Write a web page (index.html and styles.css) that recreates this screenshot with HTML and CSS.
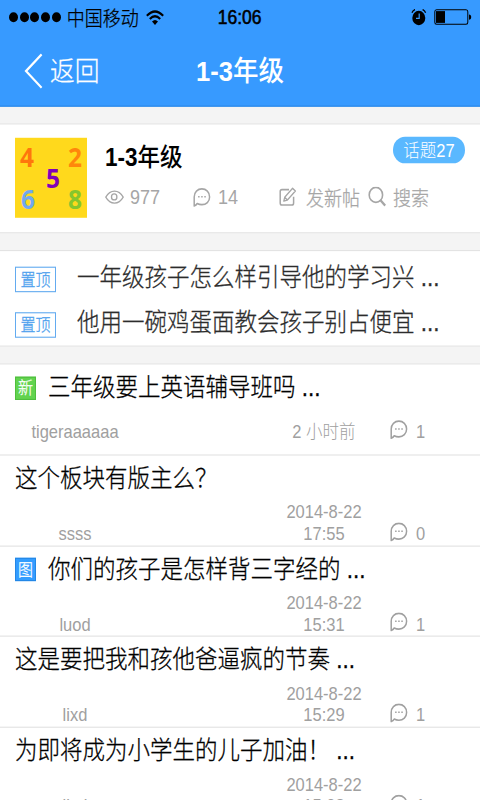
FILE: index.html
```html
<!DOCTYPE html>
<html lang="zh-CN">
<head>
<meta charset="utf-8">
<title>1-3年级</title>
<link rel="stylesheet" href="styles.css">
</head>
<body>
<svg class="defs" width="0" height="0">
  <symbol id="bubble" viewBox="0 0 18 18">
    <path d="M1.2 16.4V8.2C1.2 4 4.6 1 8.9 1S16.6 4 16.6 8.2S13.2 15.2 8.9 15.2Q6.2 15.2 4.2 14.2Q3.2 15.8 1.2 16.4Z" fill="none" stroke="currentColor" stroke-width="1.5" stroke-linejoin="round"/>
    <path d="M5.1 7.4h1.5v1.3H5.1zM8.2 7.4h1.5v1.3H8.2zM11.3 7.4h1.5v1.3h-1.5z" fill="currentColor"/>
  </symbol>
</svg>
<div class="screen">
  <header class="top">
    <div class="status">
      <div class="signal"><i></i><i></i><i></i><i></i><i></i></div>
      <span class="carrier">中国移动</span>
      <svg class="wifi" viewBox="0 0 18 14" width="18" height="14"><g fill="none" stroke="#000" stroke-width="2.1"><path d="M.8 5.2Q9-2.6 17.2 5.2"/><path d="M3.8 8.1Q9 3.2 14.2 8.1"/></g><path d="M6 10.3Q9 7.6 12 10.3L9 13.4Z"/></svg>
      <span class="clock">16:06</span>
      <svg class="alarm" viewBox="0 0 16 16" width="16" height="16"><circle cx="7.8" cy="8.2" r="6.5"/><path d="M1 3.5Q1.8 1.4 4 .6M14.6 3.5Q13.8 1.4 11.6 .6" fill="none" stroke="#000" stroke-width="1.3"/><path d="M8.2 4.2V8.6H5" fill="none" stroke="#379aff" stroke-width="1.2"/></svg>
      <svg class="battery" viewBox="0 0 38 15" width="38" height="15"><rect x=".8" y=".8" width="33" height="13" rx="1.8" fill="none" stroke="#000" stroke-width="1"/><rect x="2" y="2" width="9" height="10.6"/><path d="M35 5Q37.2 5 37.2 7.4T35 9.8Z"/></svg>
    </div>
    <div class="nav">
      <a class="back"><svg viewBox="0 0 19 32" width="19" height="32"><path d="M17.6 1L2 16L17.6 31" fill="none" stroke="#fff" stroke-width="2.1"/></svg><span>返回</span></a>
      <h1>1-3<span>年级</span></h1>
    </div>
  </header>

  <section class="card forum">
    <div class="cover">
      <span class="n4">4</span><span class="n2">2</span>
      <span class="n5">5</span>
      <span class="n6">6</span><span class="n8">8</span>
    </div>
    <div class="info">
      <div class="head"><h2>1-3<span>年级</span></h2><span class="pill">话题27</span></div>
      <div class="stats">
        <span class="views"><svg viewBox="0 0 19 13" width="19" height="13"><g fill="none" stroke="currentColor" stroke-width="1.3"><path d="M.8 6.4Q4.2 1 9.5 1T18.2 6.4Q14.8 11.8 9.5 11.8T.8 6.4Z"/><circle cx="9.2" cy="6.2" r="2.7"/></g></svg>977</span>
        <span class="replies"><svg width="18" height="18"><use href="#bubble"/></svg>14</span>
        <span class="post"><svg viewBox="0 0 18 18" width="18" height="18"><g fill="none" stroke="currentColor" stroke-width="1.5" stroke-linejoin="round"><path d="M10 2.6H3Q1.2 2.6 1.2 4.4V14.7Q1.2 16.5 3 16.5H12.8Q14.6 16.5 14.6 14.7V9"/><path d="M4.8 13L5.7 9.6L13.6 1.5L16.4 3.9L8.4 12.1ZM5.7 9.6L8.4 12.1" stroke-width="1.3"/></g></svg><em>发新帖</em></span>
        <span class="search"><svg viewBox="0 0 18 18" width="18" height="18"><g fill="none" stroke="currentColor"><circle cx="7.9" cy="7.4" r="6.7" stroke-width="1.6"/><path d="M12.4 12.2L17.2 17" stroke-width="2.2"/></g></svg><em>搜索</em></span>
      </div>
    </div>
  </section>

  <section class="card pinned">
    <div class="pin"><span class="tag">置顶</span><span>一年级孩子怎么样引导他的学习兴 ...</span></div>
    <div class="pin"><span class="tag">置顶</span><span>他用一碗鸡蛋面教会孩子别占便宜 ...</span></div>
  </section>

  <section class="card list">
    <article class="row short">
      <h3><span class="badge new">新</span>三年级要上英语辅导班吗 ...</h3>
      <div class="meta"><span class="name">tigeraaaaaa</span><span class="date">2 小时前</span><span class="count"><svg width="18" height="18"><use href="#bubble"/></svg>1</span></div>
    </article>
    <article class="row">
      <h3>这个板块有版主么？</h3>
      <div class="meta"><span class="name">ssss</span><span class="date">2014-8-22 17:55</span><span class="count"><svg width="18" height="18"><use href="#bubble"/></svg>0</span></div>
    </article>
    <article class="row">
      <h3><span class="badge pic">图</span>你们的孩子是怎样背三字经的 ...</h3>
      <div class="meta"><span class="name">luod</span><span class="date">2014-8-22 15:31</span><span class="count"><svg width="18" height="18"><use href="#bubble"/></svg>1</span></div>
    </article>
    <article class="row">
      <h3>这是要把我和孩他爸逼疯的节奏 ...</h3>
      <div class="meta"><span class="name">lixd</span><span class="date">2014-8-22 15:29</span><span class="count"><svg width="18" height="18"><use href="#bubble"/></svg>1</span></div>
    </article>
    <article class="row">
      <h3>为即将成为小学生的儿子加油！ ...</h3>
      <div class="meta"><span class="name">lixd</span><span class="date">2014-8-22 15:28</span><span class="count"><svg width="18" height="18"><use href="#bubble"/></svg>1</span></div>
    </article>
  </section>
</div>
</body>
</html>
```

FILE: styles.css
```css
* { box-sizing: border-box; margin: 0; padding: 0; }
html, body { width: 480px; height: 800px; overflow: hidden; }
body { background: #f4f4f4; font-family: "Liberation Sans", "Noto Sans CJK SC", sans-serif; font-weight: 300; }
.defs { display: block; }
svg { display: block; flex: none; }
em { font-style: normal; padding-top: 3px; }

/* 2:3 layout stretched vertically to the 3:5 viewport */
.screen {
  width: 480px; height: 720px; overflow: hidden;
  transform: scaleY(1.11111); transform-origin: 0 0;
  background: #f4f4f4;
}

.carrier, .back span, em, .pin, h3 { -webkit-text-stroke: .25px currentColor; }

.top { height: 96px; background: #379aff; border-bottom: 1px solid #2b86e6; }
.status { height: 31px; display: flex; align-items: center; padding: 0 8px 0 9px; }
.signal { display: flex; gap: 1.7px; }
.signal i { width: 9px; height: 9px; border-radius: 50%; background: #000; }
.carrier { margin-left: 6px; width: 72px; padding-top: 3px; font-size: 18px; line-height: 30px; white-space: nowrap; }
.wifi { margin-left: 7px; }
.clock { margin-left: 54px; width: 44px; padding-top: 1px; font-size: 17.5px; line-height: 31px; -webkit-text-stroke: .5px #000; }
.alarm { margin-left: 149px; }
.battery { margin-left: 7px; }

.nav { position: relative; height: 64px; display: flex; align-items: center; justify-content: center; color: #fff; }
.back { position: absolute; left: 24px; top: 15px; display: flex; align-items: center; gap: 7px; font-size: 24.75px; line-height: 32px; }
.back span { padding-top: 3px; }
h1 { font-size: 25.5px; line-height: 32px; padding-top: 2px; }
h1 span, h2 span { font-weight: 500; }

.card { background: #fff; border-top: 1px solid #e3e3e3; border-bottom: 1px solid #e3e3e3; }
.forum { margin-top: 15px; height: 99px; display: flex; padding: 12px 15px; }
.cover {
  width: 72px; height: 72px; background: #ffd91c; padding: 7px 5px 8px 5px;
  display: grid; grid-template: repeat(3, 19px) / 1fr 1fr;
  font: 700 24.5px/19px "Noto Sans", sans-serif;
}
.n4 { color: #ff760c; }
.n2 { color: #ff870b; text-align: right; }
.n5 { color: #8000b8; grid-column: 1 / 3; padding-left: 26px; }
.n6 { color: #72a8ef; padding-left: 1px; }
.n8 { color: #86c62d; text-align: right; }
.info { flex: 1; margin-left: 18px; }
.head { display: flex; justify-content: space-between; align-items: flex-start; height: 39px; }
h2 { font-size: 22.5px; line-height: 32px; padding-top: 2px; }
.pill { width: 72px; height: 24px; border-radius: 12px; background: #5ab8ff; color: #fff; font-size: 16.5px; line-height: 24px; text-align: center; margin-top: -1px; }
.stats { display: flex; align-items: center; height: 28px; color: #a6a6a6; font-size: 18px; line-height: 28px; white-space: nowrap; }
.stats span { display: flex; align-items: center; }
.stats .views, .stats .replies { padding-top: 1px; }
.views { width: 88px; gap: 6px; }
.replies { width: 86px; gap: 7px; }
.post { width: 89px; gap: 9px; }
.search { gap: 7px; }

.pinned { margin-top: 15px; height: 87px; padding-top: 4px; }
.pin { height: 40.5px; display: flex; align-items: center; padding-left: 15px; font-size: 22.5px; line-height: 40px; color: #2c2c2c; white-space: nowrap; }
.tag { width: 41px; height: 23px; margin: 3px 21px 0 0; border: 1px solid #63abf0; color: #4d9fee; font-size: 15px; line-height: 22px; text-align: center; }

.list { margin-top: 15px; }
.row { height: 81.75px; border-bottom: 1px solid #e2e2e2; display: flex; flex-direction: column; justify-content: space-between; }
.row.short { padding-bottom: 10px; }
h3 { display: flex; align-items: center; height: 41px; padding: 1px 0 0 15px; font-size: 22.5px; font-weight: 300; line-height: 40px; color: #000; white-space: nowrap; }
.badge { width: 21px; height: 21px; margin-right: 12px; color: #fff; font-size: 15px; line-height: 20px; text-align: center; }
.new { background: #62d34f; border: 1px solid #4fbe3d; }
.pic { background: #339dff; border: 1px solid #2387e6; }
.meta { flex: none; display: flex; align-items: flex-end; padding-left: 15px; color: #a0a0a0; font-size: 16.5px; line-height: 19.6px; }
.name { width: 120px; text-align: center; }
.date { width: 100px; margin-left: 139px; text-align: center; }
.count { display: flex; align-items: flex-end; gap: 8px; margin-left: 16px; }
.count svg { margin-bottom: 3px; }
```
